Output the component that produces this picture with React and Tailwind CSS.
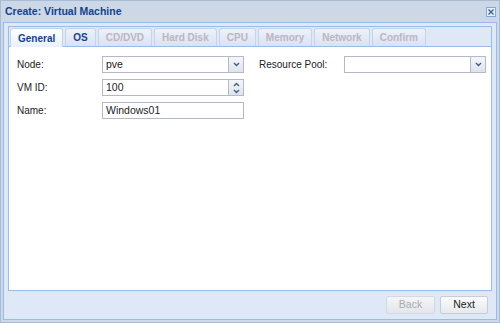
import React from 'react';

const tabs = [
  { label: 'General', active: true },
  { label: 'OS' },
  { label: 'CD/DVD', disabled: true },
  { label: 'Hard Disk', disabled: true },
  { label: 'CPU', disabled: true },
  { label: 'Memory', disabled: true },
  { label: 'Network', disabled: true },
  { label: 'Confirm', disabled: true },
];

const ComboArrow = () => (
  <div className="w-[15px] h-full border-l border-[#b5b8c8] bg-gradient-to-b from-[#f4f6f9] to-[#dfe4ea] flex items-center justify-center">
    <svg width="7" height="5" viewBox="0 0 7 5">
      <path d="M1 1 L3.5 3.5 L6 1" stroke="#3e5d8a" strokeWidth="1.4" fill="none" />
    </svg>
  </div>
);

const SpinArrows = () => (
  <div className="w-[15px] h-full border-l border-[#b5b8c8] bg-gradient-to-b from-[#f4f6f9] to-[#dfe4ea] flex flex-col items-center justify-center gap-[2px]">
    <svg width="7" height="5" viewBox="0 0 7 5">
      <path d="M1 4 L3.5 1.5 L6 4" stroke="#3e5d8a" strokeWidth="1.4" fill="none" />
    </svg>
    <svg width="7" height="5" viewBox="0 0 7 5">
      <path d="M1 1 L3.5 3.5 L6 1" stroke="#3e5d8a" strokeWidth="1.4" fill="none" />
    </svg>
  </div>
);

const Field = ({ label, value, trigger, labelWidth = 'w-[85px]', fieldWidth = 'w-[142px]' }) => (
  <div className="flex items-center h-[17px]">
    <span className={`${labelWidth} text-[10px] text-[#222]`}>{label}</span>
    <div className={`${fieldWidth} h-[17px] flex border border-[#b5b8c8] bg-white`}>
      <span className="flex-1 pl-[3px] text-[10.5px] leading-[15px] text-[#222]">{value}</span>
      {trigger === 'combo' && <ComboArrow />}
      {trigger === 'spin' && <SpinArrows />}
    </div>
  </div>
);

export default function App() {
  return (
    <div
      className="w-[500px] h-[323px] bg-[#ccd8e7] flex flex-col border border-[#a8bcd6]"
      style={{ fontFamily: '"Liberation Sans", Arial, sans-serif' }}
    >
      {/* Window header */}
      <div className="h-[21px] flex items-center justify-between pl-[4px] pr-[3px]">
        <span className="text-[10.5px] font-bold text-[#15428b]">Create: Virtual Machine</span>
        <div className="w-[10px] h-[10px] mt-[1px] border border-[#8aa6cf] bg-[#e6eef9] flex items-center justify-center">
          <svg width="6" height="6" viewBox="0 0 6 6">
            <path d="M0.5 0.5 L5.5 5.5 M5.5 0.5 L0.5 5.5" stroke="#3a5f98" strokeWidth="1.3" />
          </svg>
        </div>
      </div>

      {/* Window body */}
      <div className="flex-1 mx-[2px] mb-[2px] border border-[#99bbe8] bg-[#dfe8f6] flex flex-col">
        <div className="flex-1 mx-[4px] mt-[3px] border border-[#99bbe8] flex flex-col">
          {/* Tab strip */}
          <div className="h-[20px] bg-[#dfe8f6] border-b border-[#99bbe8] flex items-end gap-[2px] pl-[1px]">
            {tabs.map((t) => (
              <div
                key={t.label}
                className={`h-[18px] px-[7px] flex items-center rounded-t-[3px] border border-b-0 border-[#c3d3ea] text-[10px] font-bold ${
                  t.active
                    ? 'bg-gradient-to-b from-white to-[#e9f0fa] text-[#15428b] h-[19px] -mb-px border-[#99bbe8]'
                    : 'bg-gradient-to-b from-[#edf2fa] to-[#d8e3f3]'
                } ${t.disabled ? 'text-[#bdb5c0]' : t.active ? '' : 'text-[#15428b]'}`}
              >
                {t.label}
              </div>
            ))}
          </div>

          {/* Form area */}
          <div className="flex-1 bg-white px-[8px] pt-[9px] flex gap-[15px]">
            <div className="flex flex-col gap-[6px]">
              <Field label="Node:" value="pve" trigger="combo" />
              <Field label="VM ID:" value="100" trigger="spin" />
              <Field label="Name:" value="Windows01" />
            </div>
            <div className="flex flex-col">
              <Field label="Resource Pool:" value="" trigger="combo" />
            </div>
          </div>
        </div>

        {/* Footer buttons */}
        <div className="h-[28px] flex items-center justify-end gap-[5px] pr-[8px]">
          <button className="w-[49px] h-[18px] rounded-[2px] border border-[#d4d9df] bg-gradient-to-b from-[#f4f5f7] to-[#e3e6ea] text-[10.5px] text-[#a9a9b0]">
            Back
          </button>
          <button className="w-[48px] h-[18px] rounded-[2px] border border-[#c7cdd5] bg-gradient-to-b from-[#fbfbfc] to-[#e6e9ed] text-[10.5px] text-[#222]">
            Next
          </button>
        </div>
      </div>
    </div>
  );
}
